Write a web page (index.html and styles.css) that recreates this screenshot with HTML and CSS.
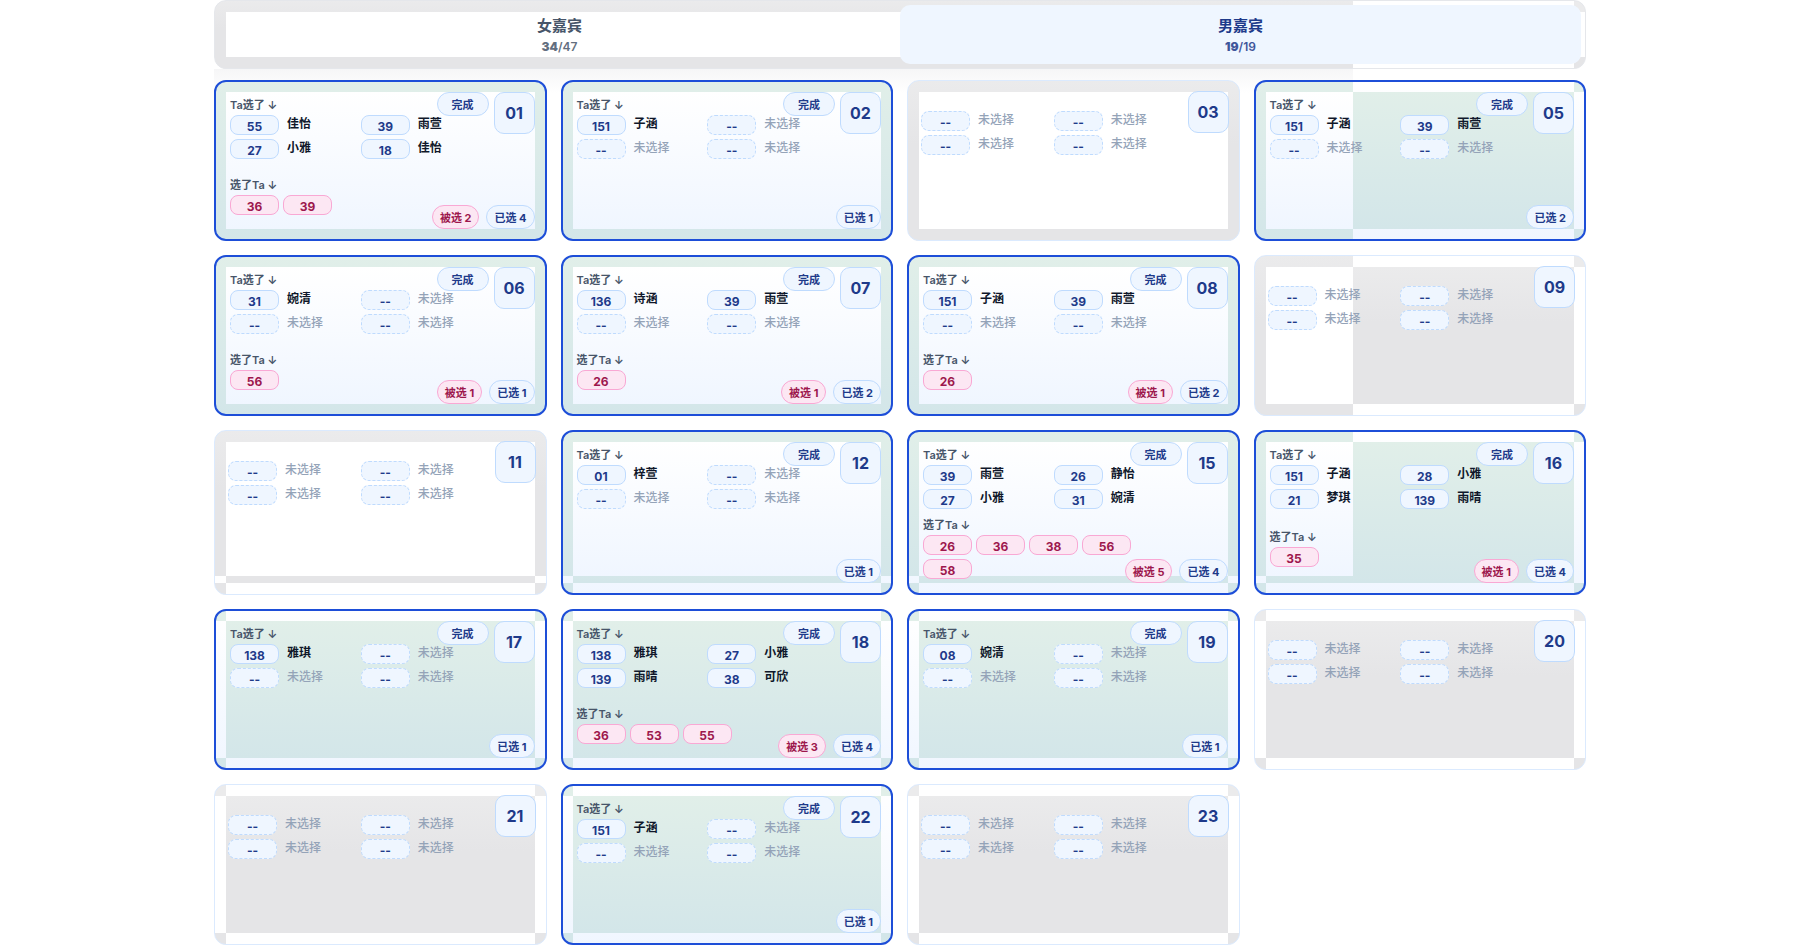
FILE: index.html
```
<!DOCTYPE html>
<html lang="zh-CN">

<head>
    <meta charset="UTF-8">
    <meta name="viewport" content="width=device-width, initial-scale=1.0">
    <title>男嘉宾</title>
    <link rel="stylesheet" href="styles.css">
</head>

<body>
    <div class="wrap">
        <div class="tabs glass">
            <button class="tab" type="button">
                <span class="tabName">女嘉宾</span>
                <span class="tabCount"><b>34</b>/47</span>
            </button>
            <button class="tab active" type="button">
                <span class="tabName">男嘉宾</span>
                <span class="tabCount"><b>19</b>/19</span>
            </button>
        </div>
        <div class="board"></div>
    </div>

    <script src="script.js"></script>
</body>

</html>
```
FILE: styles.css
```
* {
    box-sizing: border-box;
}

body {
    margin: 0;
    background-color: #fff;
    color: #0f172a;
    font-family: Inter, "Noto Sans CJK SC", sans-serif;
    font-size: 12px;
}

button {
    font-family: inherit;
    cursor: pointer;
}

.wrap {
    max-width: 1400px;
    margin: 0 auto;
    padding: 0 14px;
}

/* 边框一圈着色, --w / --h 以外的部分反过来 */
.glass {
    --w: 100%;
    --h: 100%;
    --plain: linear-gradient(#fff, #fff);
    --tint: linear-gradient(#ebebec, #e5e5e7 40%, #e5e5e7);
    --cornerTop: linear-gradient(#ebebec, #ebebec);
    --cornerBottom: linear-gradient(#e5e5e7, #e5e5e7);
    background-image: var(--plain), var(--tint), var(--tint), var(--cornerTop), var(--cornerTop), var(--cornerBottom), var(--cornerBottom), var(--plain);
    background-position: 12px 12px, 0 0, 12px 12px, left top, right top, left bottom, right bottom, 0 0;
    background-size:
        calc(min(var(--w), 100% - 12px) - 12px) calc(min(var(--h), 100% - 12px) - 12px),
        var(--w) var(--h),
        calc(100% - 24px) calc(100% - 24px),
        12px 12px, 12px 12px, 12px 12px, 12px 12px,
        100% 100%;
    background-repeat: no-repeat;
    background-origin: border-box;
}

.tabs {
    --w: 1139px;
    display: flex;
    padding: 4px;
    border: 1px solid #e5e7eb;
    border-radius: 12px;
}

.tab {
    flex: 1;
    display: flex;
    flex-direction: column;
    align-items: center;
    padding: 10px;
    border: 0;
    border-radius: 10px;
    background: none;
    color: #475569;
}

.tab.active {
    background-color: #eff6ff;
    color: #1e3a8a;
}

.tabName {
    font-size: 15px;
    font-weight: 700;
    line-height: 22px;
}

.tabCount {
    font-size: 12px;
    font-weight: 600;
    line-height: 17px;
    padding-top: 1px;
    opacity: .85;
}

.tab {
    padding-bottom: 9px;
}

.board {
    display: grid;
    grid-template-columns: repeat(4, 1fr);
    gap: 14px;
    padding-top: 11px;
    background: linear-gradient(#f6f6f7, #fff) no-repeat 0 0 / 1139px 24px;
}

.card {
    position: relative;
    display: flex;
    flex-direction: column;
    min-height: 161px;
    padding: 13px;
    border: 1px solid #dbeafe;
    border-radius: 12px;
}

.card.chosen {
    --plain: linear-gradient(#fff, #f0f6ff);
    --tint: linear-gradient(#e1efe9, #d3e6e9);
    --cornerTop: linear-gradient(#e1efe9, #e1efe9);
    --cornerBottom: linear-gradient(#d3e6e9, #d3e6e9);
    padding: 14px;
    border: 2px solid #1d4ed8;
}

.card.edge {
    --w: 99px;
}

.card.low {
    --h: calc(100% - 19px);
}

.card.off {
    --w: 0px;
    --h: 0px;
}

.part {
    flex: 1 1 auto;
}

.part + .part {
    margin-top: 7px;
}

.label {
    margin-bottom: 1px;
    color: #475569;
    font-size: 11px;
    font-weight: 600;
    line-height: 18px;
}

.picks {
    display: grid;
    grid-template-columns: 1fr 1fr;
    gap: 4px 6px;
    margin: 0 45px 0 0;
    padding: 0;
    list-style: none;
}

.card:not(.chosen) .picks {
    padding-top: 17px;
}

.picks li {
    display: flex;
    gap: 8px;
    font-weight: 700;
    line-height: 18px;
}

.picks .none {
    color: #94a3b8;
    font-weight: 500;
}

.chip {
    width: 49px;
    height: 20px;
    padding-top: 1px;
    border: 1px solid #bfdbfe;
    border-radius: 8px;
    background-color: #eff6ff;
    color: #1e3a8a;
    font-weight: 700;
    line-height: 20px;
    text-align: center;
}

.none .chip {
    border-style: dashed;
}

.fans {
    display: flex;
    flex-wrap: wrap;
    gap: 4px;
    margin-right: 60px;
}

.pink {
    border-color: #f9a8d4;
    background-color: #fce7f3;
    color: #9d174d;
}

/* 右上角编号 */
.top {
    position: absolute;
    top: 10px;
    right: 10px;
    display: flex;
    align-items: flex-start;
    gap: 5px;
}

.no {
    width: 41px;
    padding-top: 1px;
    border: 1px solid #bfdbfe;
    border-radius: 10px;
    background-color: #eff6ff;
    color: #1e3a8a;
    font-size: 16px;
    font-weight: 700;
    line-height: 39px;
    text-align: center;
}

.pill {
    padding: 2px 7px 0;
    border: 1px solid #bfdbfe;
    border-radius: 12px;
    background-color: #eff6ff;
    color: #1e3a8a;
    font-size: 11px;
    font-weight: 700;
    line-height: 20px;
}

.done {
    padding: 2px 14px 0;
}

.pill.pink {
    border-color: #f9a8d4;
    background-color: #fce7f3;
    color: #9d174d;
}

.bottom {
    position: absolute;
    right: 10px;
    bottom: 10px;
    display: flex;
    gap: 7px;
}

@media (max-width: 1100px) {
    .board {
        grid-template-columns: repeat(2, 1fr);
    }
}
```
FILE: script.js
```
var list = [
    { no: '01', picks: [['55', '佳怡'], ['39', '雨萱'], ['27', '小雅'], ['18', '佳怡']], fans: ['36', '39'] },
    { no: '02', picks: [['151', '子涵']] },
    { no: '03', picks: [] },
    { no: '05', picks: [['151', '子涵'], ['39', '雨萱']], cls: 'edge' },
    { no: '06', picks: [['31', '婉清']], fans: ['56'] },
    { no: '07', picks: [['136', '诗涵'], ['39', '雨萱']], fans: ['26'] },
    { no: '08', picks: [['151', '子涵'], ['39', '雨萱']], fans: ['26'] },
    { no: '09', picks: [], cls: 'edge' },
    { no: '11', picks: [], cls: 'low' },
    { no: '12', picks: [['01', '梓萱']], cls: 'low' },
    { no: '15', picks: [['39', '雨萱'], ['26', '静怡'], ['27', '小雅'], ['31', '婉清']], fans: ['26', '36', '38', '56', '58'], cls: 'low' },
    { no: '16', picks: [['151', '子涵'], ['28', '小雅'], ['21', '梦琪'], ['139', '雨晴']], fans: ['35'], cls: 'edge low' },
    { no: '17', picks: [['138', '雅琪']], cls: 'off' },
    { no: '18', picks: [['138', '雅琪'], ['27', '小雅'], ['139', '雨晴'], ['38', '可欣']], fans: ['36', '53', '55'], cls: 'off' },
    { no: '19', picks: [['08', '婉清']], cls: 'off' },
    { no: '20', picks: [], cls: 'off' },
    { no: '21', picks: [], cls: 'off' },
    { no: '22', picks: [['151', '子涵']], cls: 'off' },
    { no: '23', picks: [], cls: 'off' }
]

function pickHtml(pick) {
    if (!pick) {
        return '<li class="none"><span class="chip">--</span>未选择</li>'
    }
    return '<li><span class="chip">' + pick[0] + '</span>' + pick[1] + '</li>'
}

function cardHtml(item) {
    var count = item.picks.length
    var fans = item.fans || []
    var html = '<div class="part">'
    if (count) html += '<div class="label">Ta选了 ↓</div>'
    html += '<ul class="picks">'
    for (var i = 0; i < 4; i++) {
        html += pickHtml(item.picks[i])
    }
    html += '</ul></div>'

    if (fans.length) {
        html += '<div class="part"><div class="label">选了Ta ↓</div><div class="fans">'
        fans.forEach(function (e) {
            html += '<span class="chip pink">' + e + '</span>'
        })
        html += '</div></div>'
    }

    html += '<div class="top">'
    if (count) html += '<button class="pill done" type="button">完成</button>'
    html += '<span class="no">' + item.no + '</span></div>'

    if (count) {
        html += '<div class="bottom">'
        if (fans.length) html += '<span class="pill pink">被选 ' + fans.length + '</span>'
        html += '<span class="pill">已选 ' + count + '</span></div>'
    }
    return html
}

var board = document.querySelector('.board')
list.forEach(function (item) {
    var card = document.createElement('div')
    card.className = 'card glass ' + (item.cls || '') + (item.picks.length ? ' chosen' : '')
    card.innerHTML = cardHtml(item)
    board.appendChild(card)
})
```
